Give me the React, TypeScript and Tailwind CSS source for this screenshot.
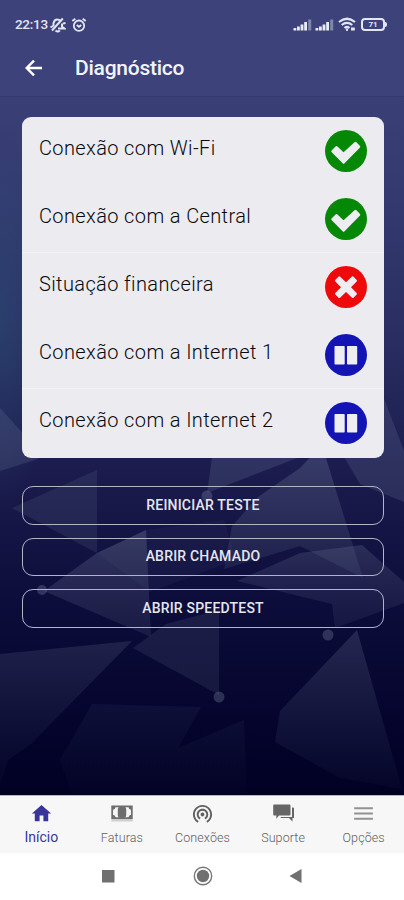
import type { ReactNode } from "react";
import { MdHome, MdMenu, MdWifiTethering } from "react-icons/md";

type Status = "ok" | "error" | "paused";

const checks: { label: string; status: Status; divider?: boolean }[] = [
    { label: "Conexão com Wi-Fi", status: "ok" },
    { label: "Conexão com a Central", status: "ok", divider: true },
    { label: "Situação financeira", status: "error" },
    { label: "Conexão com a Internet 1", status: "paused", divider: true },
    { label: "Conexão com a Internet 2", status: "paused" },
];

const actions = ["REINICIAR TESTE", "ABRIR CHAMADO", "ABRIR SPEEDTEST"];

const statusColors: Record<Status, string> = {
    ok: "bg-[#058805]",
    error: "bg-[#ee0a0a]",
    paused: "bg-[#1414b4]",
};

const StatusBadge = ({ status }: { status: Status }) => (
    <span
        className={`flex h-[42px] w-[42px] shrink-0 items-center justify-center rounded-full text-[#eeeef2] ${statusColors[status]}`}
    >
        {status === "ok" && (
            <svg viewBox="0 0 42 42" className="h-[42px] w-[42px]" fill="currentColor">
                <path d="M6.5 20.5 10.8 16.2Q11.5 15.7 12.2 16.2L18.5 22.3 29.8 12Q30.5 11.6 31.2 12L35 16Q35.6 16.8 35 17.5L19.3 33.6Q18.6 34.2 17.9 33.6L6.5 22Q6 21.2 6.5 20.5Z" />
            </svg>
        )}
        {status === "error" && (
            <svg viewBox="0 0 42 42" className="h-[42px] w-[42px]" fill="currentColor">
                <path d="M15 10.6 21 16.2 27 10.6Q27.8 10 28.6 10.7L31.7 14Q32.3 14.8 31.7 15.5L26 21.2 31.7 27Q32.3 27.8 31.7 28.5L28.5 31.7Q27.7 32.3 27 31.7L21 26 15 31.7Q14.2 32.3 13.5 31.7L10.3 28.5Q9.7 27.8 10.3 27L16 21.2 10.3 15.5Q9.7 14.8 10.3 14L13.4 10.7Q14.2 10 15 10.6Z" />
            </svg>
        )}
        {status === "paused" && (
            <svg viewBox="0 0 42 42" className="h-[42px] w-[42px]" fill="currentColor">
                <rect x="9.5" y="12" width="10.2" height="18.5" rx="0.8" />
                <rect x="22" y="12" width="10.2" height="18.5" rx="0.8" />
            </svg>
        )}
    </span>
);

const Signal = () => (
    <svg viewBox="0 0 19 12" className="h-3 w-[19px]" fill="#e9ebf7">
        <rect x="0.5" y="9" width="2.8" height="2.5" />
        <rect x="4" y="7.5" width="2.8" height="4" />
        <rect x="7.6" y="5.5" width="2.8" height="6" />
        <rect x="11.2" y="3" width="2.8" height="8.5" />
        <rect x="15.2" y="0.5" width="3" height="11" opacity="0.4" />
    </svg>
);

const StatusBar = () => (
    <div className="flex h-12 items-center justify-between pl-[15px] pr-[17px] text-[#e3e5f4]">
        <div className="flex items-center pt-px">
            <span className="w-[34px] text-[13.5px] font-medium leading-none tracking-[-0.3px]">22:13</span>
            {/* Muted bell */}
            <svg viewBox="0 0 17 16" className="h-4 w-[17px]" fill="none" stroke="currentColor" strokeWidth="2">
                <path d="M1.5 10.5 4.5 8.5V6Q5.5 2.3 8.5 2.5 11 2.6 11.8 4.5M13 6.5V9.5L15.5 11.5H9" />
                <path d="M13.8 1.5 3 13.5M14 6.5 16.5 6" />
                <path d="M6.5 13.5Q9 15.5 10.8 13.3" />
            </svg>
            {/* Alarm */}
            <svg
                viewBox="0 0 16 16"
                className="ml-[5px] h-4 w-4"
                fill="none"
                stroke="currentColor"
                strokeWidth="1.8"
            >
                <circle cx="8" cy="8.7" r="5.2" />
                <path d="M1.3 4 4.3 1.7M14.7 4 11.7 1.7M5.7 8 8 9.8 10.3 8" />
            </svg>
        </div>
        <div className="flex items-center pt-px">
            <Signal />
            <span className="w-[3.5px]" />
            <Signal />
            <svg
                viewBox="0 0 18 15"
                className="ml-1 h-[15px] w-[18px]"
                fill="none"
                stroke="currentColor"
                strokeWidth="2.2"
            >
                <path d="M1 5Q9-1.5 17 5M3.7 8Q9 3.8 14.3 8M6.5 11Q9 9 11.5 11" />
                <circle cx="9" cy="12.7" r="1.2" fill="currentColor" stroke="none" />
                <rect x="13" y="10.5" width="3.8" height="3" fill="currentColor" stroke="none" />
            </svg>
            <div className="ml-[5px] flex h-[13px] w-[24px] items-center justify-center rounded-[4px] border-2 border-current text-[8px] font-bold leading-none">
                71
            </div>
            <span className="h-[5px] w-[2px] rounded-r bg-current" />
        </div>
    </div>
);

// Low-poly pattern behind the content
const Backdrop = () => (
    <svg viewBox="0 97 404 698" className="absolute inset-0 h-full w-full" preserveAspectRatio="none">
        <defs>
            <linearGradient id="base" x1="0" y1="0" x2="0" y2="1">
                <stop offset="0" stopColor="#3a3f75" />
                <stop offset="0.14" stopColor="#343a70" />
                <stop offset="0.35" stopColor="#292d61" />
                <stop offset="0.55" stopColor="#1a1b4c" />
                <stop offset="0.72" stopColor="#0d0d3b" />
                <stop offset="0.9" stopColor="#04042d" />
                <stop offset="1" stopColor="#010124" />
            </linearGradient>
            <linearGradient id="facet" x1="0" y1="0" x2="0" y2="1">
                <stop offset="0" stopColor="#8592ab" stopOpacity="0.27" />
                <stop offset="1" stopColor="#75809b" stopOpacity="0.13" />
            </linearGradient>
            <linearGradient id="dusk" x1="0" y1="0" x2="0" y2="1">
                <stop offset="0" stopColor="#75809b" stopOpacity="0.24" />
                <stop offset="1" stopColor="#75809b" stopOpacity="0.03" />
            </linearGradient>
            <radialGradient id="left" cx="0" cy="0.5" r="0.5">
                <stop offset="0" stopColor="#2a5278" stopOpacity="0.45" />
                <stop offset="1" stopColor="#2a5278" stopOpacity="0" />
            </radialGradient>
            <linearGradient id="fade" x1="0" y1="0" x2="1" y2="0">
                <stop offset="0" stopColor="#6c7892" stopOpacity="0.16" />
                <stop offset="1" stopColor="#6c7892" stopOpacity="0.16" />
            </linearGradient>
        </defs>
        <rect y="97" width="404" height="698" fill="url(#base)" />
        <rect y="130" width="110" height="380" fill="url(#left)" />
        <path d="M0 408 38 450V459L0 471Z" fill="#8592ab" opacity="0.18" />
        <path d="M380 388 404 451V502L360 484 340 450Z" fill="#8592ab" opacity="0.18" />
        <path d="M213 450H318L207 493Z" fill="#7f8ba8" opacity="0.2" />
        <path d="M322 445 363 578 300 546 224 569 232 526 258 497 300 468Z" fill="url(#facet)" />
        <path d="M12 508 97 470V553Z" fill="url(#fade)" />
        <path d="M44 591 97 553 146 530 151 637Z" fill="url(#facet)" />
        <path d="M97 553 146 530 224 520 236 560 150 592Z" fill="#7f8ba8" opacity="0.06" />
        <path d="M133 648 166 624 219 610V695Z" fill="url(#fade)" />
        <path d="M237 581 300 553 362 545 404 582V603L335 628 332 604Z" fill="url(#facet)" opacity="0.75" />
        <path d="M0 654 132 641 31 744 8 760 0 785Z" fill="url(#dusk)" opacity="0.8" />
        <path d="M60 760 92 704 201 707 178 748 244 720 247 795H72Z" fill="url(#dusk)" opacity="0.35" />
        <path d="M357 630 402 789 340 778 275 742 280 711Z" fill="url(#dusk)" />
        <g fill="#8490a9" opacity="0.3">
            <circle cx="207" cy="496" r="5.5" />
            <circle cx="42" cy="590" r="5" />
            <circle cx="328" cy="635" r="5.5" />
            <circle cx="219" cy="697" r="5.5" />
        </g>
    </svg>
);

const BillIcon = () => (
    <svg viewBox="0 0 22 17" className="h-[17px] w-[22px]">
        <rect x="0.3" y="0.5" width="21.4" height="13.5" fill="#6d6d6d" />
        <rect x="0.3" y="14" width="21.4" height="2.5" fill="#cfcfcf" />
        <path d="M4.5 2.3H17.5Q17.8 4.5 20 4.8V9.7Q17.8 10 17.5 12.2H4.5Q4.2 10 2 9.7V4.8Q4.2 4.5 4.5 2.3Z" fill="#f5f5f5" />
        <rect x="6.8" y="1.5" width="8.4" height="11.5" rx="3" fill="#6d6d6d" />
    </svg>
);

const ChatIcon = () => (
    <svg viewBox="0 0 22 18" className="ml-0.5 h-[18px] w-[22px]" fill="#666">
        <path d="M1 .5H16.5Q17.5.5 17.5 1.5V10.5Q17.5 11.5 16.5 11.5H6L3.3 14.8V11.5H1Q.2 11.5.2 10.5V1.5Q.2.5 1 .5Z" />
        <path d="M19 3.5H20Q21 3.5 21 4.5V14H19.5V17.5L16 14H8.5Q7.5 14 7.5 13H19Z" />
    </svg>
);

const tabs: { label: string; icon: ReactNode; active?: boolean }[] = [
    { label: "Início", icon: <MdHome className="h-[23px] w-[23px]" />, active: true },
    { label: "Faturas", icon: <BillIcon /> },
    { label: "Conexões", icon: <MdWifiTethering className="h-[23px] w-[23px]" /> },
    { label: "Suporte", icon: <ChatIcon /> },
    { label: "Opções", icon: <MdMenu className="h-[25px] w-[25px] text-[#929292]" /> },
];

export default function App() {
    return (
        <div className="flex h-[900px] w-[404px] flex-col overflow-hidden bg-white font-['Roboto',sans-serif]">
            <header className="h-[97px] shrink-0 border-b border-[#34396d] bg-[#3d437a]">
                <StatusBar />
                <div className="flex h-10 items-center pl-[25px] text-white">
                    <svg viewBox="0 0 18 18" className="h-[18px] w-[18px]" fill="none" stroke="currentColor" strokeWidth="2.4">
                        <path d="M17 9H2M9 1.7 1.7 9 9 16.3" />
                    </svg>
                    <h1 className="ml-8 text-[21px] font-medium leading-none tracking-[-0.25px] text-[#f3f3fa]">
                        Diagnóstico
                    </h1>
                </div>
            </header>

            <main className="relative flex-1 pl-[22px] pr-5 pt-5">
                <Backdrop />
                <div className="relative">
                    <ul className="h-[341px] overflow-hidden rounded-[9px] bg-[#ebebf0]">
                        {checks.map((check) => (
                            <li
                                key={check.label}
                                className={`flex h-[68px] justify-between border-b px-[17px] pt-[13px] ${
                                    check.divider ? "border-[#f2f2f5]" : "border-transparent"
                                }`}
                            >
                                <span className="pt-1.5 text-[20px] font-light leading-6 tracking-[0.38px] text-[#08080c]">
                                    {check.label}
                                </span>
                                <StatusBadge status={check.status} />
                            </li>
                        ))}
                    </ul>

                    <div className="mt-7 flex flex-col gap-[13px]">
                        {actions.map((action) => (
                            <button
                                key={action}
                                className="h-[38.5px] rounded-[11px] border border-[#b0b5c8] text-[14px] font-medium tracking-[0.2px] text-[#e6e6ef]"
                            >
                                {action}
                            </button>
                        ))}
                    </div>
                </div>
            </main>

            <nav className="grid h-[58px] shrink-0 grid-cols-5 border-t border-[#b5b5bd] bg-[#f7f7f7] pl-px">
                {tabs.map((tab) => (
                    <button
                        key={tab.label}
                        className={`flex flex-col items-center pt-[5px] ${tab.active ? "text-[#38359b]" : "text-[#606060]"}`}
                    >
                        <span className="flex h-6 items-center">{tab.icon}</span>
                        <span
                            className={
                                tab.active
                                    ? "text-[14px] leading-6"
                                    : "text-[12.5px] font-light leading-[26px] tracking-[0.1px]"
                            }
                        >
                            {tab.label}
                        </span>
                    </button>
                ))}
            </nav>

            {/* Android navigation */}
            <div className="grid h-[47px] shrink-0 grid-cols-[108px_188px_108px] bg-white">
                <svg viewBox="0 0 14 14" className="mt-4 ml-[101px] h-[14px] w-[14px]">
                    <rect x="1" y="1" width="12.5" height="12.5" fill="#707070" />
                </svg>
                <svg viewBox="0 0 20 20" className="mt-[13px] ml-[85px] h-5 w-5">
                    <circle cx="10" cy="10" r="8.7" fill="none" stroke="#777" strokeWidth="1.4" />
                    <circle cx="10" cy="10" r="6.2" fill="#707070" />
                </svg>
                <svg viewBox="0 0 14 14" className="mt-4 -ml-[7px] h-[14px] w-[14px]">
                    <path d="M12.5 0V14L.5 7Z" fill="#707070" />
                </svg>
            </div>
        </div>
    );
}
